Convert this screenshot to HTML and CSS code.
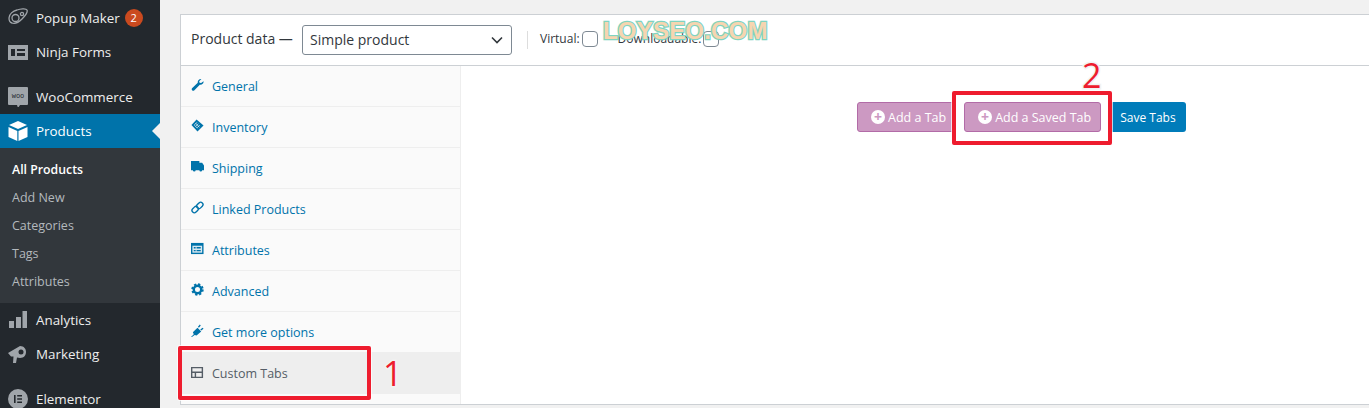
FILE: index.html
```html
<!DOCTYPE html>
<html lang="en">
<head>
    <meta charset="UTF-8">
    <meta name="viewport" content="width=device-width, initial-scale=1.0">
    <title>Edit Product</title>
    <link rel="stylesheet" href="styles.css">
</head>
<body>
    <nav class="sidebar">
        <a class="menu-item">
            <svg class="menu-icon" viewBox="0 0 20 20"><g fill="none" stroke="#a0a5aa" stroke-width="1.3"><path d="M1 10c0-4 4-7 8-8 3-1 9-2 10 0 1 2-2 6-5 9-3 3-7 5-10 4-2-.5-3-3-3-5z"/><circle cx="7.5" cy="10" r="3.5"/><circle cx="14" cy="6" r="1.6"/></g></svg>
            <span>Popup Maker</span><span class="badge">2</span>
        </a>
        <a class="menu-item">
            <svg class="menu-icon" viewBox="0 0 20 20"><path fill="#a0a5aa" fill-rule="evenodd" d="M0 3h20v15H0zM3 7v7h4V7zm6 0v2h8V7zm0 4v3h8v-3z"/></svg>
            <span>Ninja Forms</span>
        </a>
        <div class="menu-sep"></div>
        <a class="menu-item">
            <svg class="menu-icon" viewBox="0 0 20 20"><path fill="#a0a5aa" d="M1 0h18a1 1 0 0 1 1 1v16a1 1 0 0 1-1 1h-7l-2 3-1-3H1a1 1 0 0 1-1-1V1a1 1 0 0 1 1-1z"/><text x="10" y="11" class="woo-text">woo</text></svg>
            <span>WooCommerce</span>
        </a>
        <a class="menu-item current">
            <svg class="menu-icon" viewBox="0 0 20 20"><path fill="#fff" d="M10 0l9 4-9 4-9-4zM.5 6l8.8 4v10L.5 16zM19.5 6v10l-9 4V10z"/></svg>
            <span>Products</span>
        </a>
        <div class="submenu">
            <a class="sub-active">All Products</a>
            <a>Add New</a>
            <a>Categories</a>
            <a>Tags</a>
            <a>Attributes</a>
        </div>
        <a class="menu-item">
            <svg class="menu-icon" viewBox="0 0 20 20"><path fill="#a0a5aa" d="M1 11h5v7H1zM8 7h5v11H8zM14.500 1H19v17h-4.500z"/></svg>
            <span>Analytics</span>
        </a>
        <a class="menu-item">
            <svg class="menu-icon" viewBox="0 0 20 20"><path fill="#a0a5aa" d="M0 9l12-7c4 0 6 3 6 6s-2 6-6 6l-3-.5-1 5.500H5l.5-6.500H3z"/><circle cx="13" cy="8" r="2.500" fill="#23282d"/></svg>
            <span>Marketing</span>
        </a>
        <div class="menu-sep"></div>
        <a class="menu-item">
            <svg class="menu-icon" viewBox="0 0 20 20"><path fill="#a0a5aa" fill-rule="evenodd" d="M10 0a10 10 0 1 1 0 20 10 10 0 0 1 0-20zM6 6v8h1.600V6zm3.200 0v1.600H14V6zm0 3.200v1.600H14V9.200zm0 3.200V14H14v-1.600z"/></svg>
            <span>Elementor</span>
        </a>
    </nav>

    <main class="content">
        <section class="product-box">
            <header class="box-head">
                <span class="box-title">Product data —</span>
                <div class="fake-select">
                    <span class="select-text">Simple product</span>
                    <svg width="12" height="8" viewBox="0 0 12 8"><path d="M1 1.500l5 5 5-5" fill="none" stroke="#32373c" stroke-width="1.600"/></svg>
                </div>
                <div class="head-sep"></div>
                <label class="head-check">Virtual: <span class="checkbox"></span></label>
                <label class="head-check">Downloadable: <span class="checkbox"></span></label>
            </header>
            <div class="box-body">
                <ul class="tabs">
                    <li><svg viewBox="0 0 14 14"><path d="M13.500 3.500c.4 2-1.500 4.300-4 3.800L3.400 13.400c-1.500 1.200-3.500-.8-2.300-2.300l6.200-6c-.5-2.500 1.800-4.500 3.900-4L8.800 3.500l.4 1.600 1.700.4z"/></svg>General</li>
                    <li><svg viewBox="0 0 14 14"><path d="M6 .5l7.500 6.500L7 13.500.5 6.500z"/><path d="M3.500 6.500l3-3M5 8l3-3M6.500 9.500l3-3M5 4.500L9 9M3.500 6.500l3.500 3.500" stroke="#fafafa" stroke-width=".7" fill="none"/></svg>Inventory</li>
                    <li><svg viewBox="0 0 14 14"><path d="M0 1h9v2h3l2 3v5h-2a1.500 1.500 0 0 1-3 0H5a1.500 1.500 0 0 1-3 0H0z"/></svg>Shipping</li>
                    <li><svg viewBox="0 0 14 14"><g fill="none" stroke="#0073aa" stroke-width="1.500"><rect x="7" y="1" width="5" height="7.500" rx="2.500" transform="rotate(45 9.500 4.750)"/><rect x="2" y="5.500" width="5" height="7.500" rx="2.500" transform="rotate(45 4.500 9.250)"/></g></svg>Linked Products</li>
                    <li><svg viewBox="0 0 14 14"><path d="M0 1h13.500v12H0z"/><path fill="#d7e8f0" d="M1.500 4h10.500v7.500H1.500z"/><path d="M3 5.500h2v1.500H3zM6 5.500h4.500v1.500H6zM3 8.500h2V10H3zM6 8.500h4.500V10H6z"/></svg>Attributes</li>
                    <li><svg viewBox="0 0 14 14"><circle cx="7" cy="7" r="4" fill="none" stroke="#0073aa" stroke-width="2.600"/><circle cx="7" cy="7" r="5.700" fill="none" stroke="#0073aa" stroke-width="2" stroke-dasharray="2.400 2.070"/></svg>Advanced</li>
                    <li><svg viewBox="0 0 14 14"><path d="M0 14l3-3-1-2 5-5 4 4-5 4.500-2-.7-3 2.200zM7.500 3l2-2.500 1 1L8.500 4zM10 6l2.500-2 1 1L11 7z"/></svg>Get more options</li>
                    <li class="active"><svg viewBox="0 0 14 14"><path fill-rule="evenodd" fill="#555d66" d="M0 1h13v12H0zM1.500 2.500v3.500h10V2.500zm0 5v4h2.500v-4zm4 0v4h6v-4z"/></svg>Custom Tabs</li>
                </ul>
                <div class="tab-panel">
                    <a class="btn btn-purple"><span class="plus">+</span>Add a Tab</a>
                    <a class="btn btn-purple"><span class="plus">+</span>Add a Saved Tab</a>
                    <a class="btn btn-blue">Save Tabs</a>
                </div>
            </div>
        </section>
    </main>

    <!-- annotations drawn on top of the screenshot -->
    <div class="mark mark-one"></div>
    <div class="mark mark-two"></div>
    <span class="mark-num num-one">1</span>
    <span class="mark-num num-two">2</span>
    <span class="watermark">LOYSEO.COM</span>
</body>
</html>
```

FILE: styles.css
```css
html, body {
    height: 408px;
    overflow: hidden;
}
body {
    margin: 0;
    display: flex;
    background-color: #f1f1f1;
    color: #32373c;
    font-family: "Open Sans", "Noto Sans", sans-serif;
    font-size: 13px;
    position: relative;
}
a {
    text-decoration: none;
}

/* sidebar */
.sidebar {
    width: 160px;
    flex-shrink: 0;
    height: 408px;
    padding-top: 1px;
    box-sizing: border-box;
    background-color: #23282d;
    overflow: hidden;
}
.menu-item {
    display: flex;
    align-items: center;
    height: 34px;
    padding-left: 8px;
    color: #eee;
    font-size: 13.400px;
    position: relative;
}
.menu-icon {
    width: 20px;
    height: 20px;
    margin-right: 8px;
    flex-shrink: 0;
}
.woo-text {
    font-family: "Liberation Mono", monospace;
    font-size: 7px;
    text-anchor: middle;
    fill: #23282d;
}
.badge {
    width: 18px;
    height: 18px;
    margin-left: 5px;
    border-radius: 50%;
    background-color: #ca4a1f;
    color: #fff;
    font-size: 11px;
    line-height: 18px;
    text-align: center;
}
.menu-sep {
    height: 11px;
}
.current {
    background-color: #0073aa;
    color: #fff;
}
.current::after {
    content: "";
    position: absolute;
    right: 0;
    top: 9px;
    border: 8px solid transparent;
    border-right-color: #f1f1f1;
    border-left-width: 0;
}
.submenu {
    display: flex;
    flex-direction: column;
    padding: 8px 0 7px;
    background-color: #32373c;
}
.submenu a {
    height: 28px;
    line-height: 28px;
    padding-left: 12px;
    color: #b4b9be;
    font-size: 12.500px;
}
.submenu a.sub-active {
    color: #fff;
    font-weight: 600;
    font-size: 12.300px;
}

/* product data box */
.content {
    flex: 1;
    padding: 14px 0 0 20px;
    min-width: 0;
}
.product-box {
    height: 391px;
    box-sizing: border-box;
    background-color: #fff;
    border: 1px solid #ccd0d4;
    border-right: none;
    display: flex;
    flex-direction: column;
}
.box-head {
    display: flex;
    align-items: center;
    height: 51px;
    flex-shrink: 0;
    box-sizing: border-box;
    padding-left: 10px;
    border-bottom: 1px solid #ccd0d4;
}
.box-title {
    width: 111px;
    margin-bottom: 4px;
    font-size: 14px;
}
.fake-select {
    display: flex;
    align-items: center;
    justify-content: space-between;
    width: 210px;
    height: 30px;
    box-sizing: border-box;
    padding: 0 8px 0 7px;
    border: 1px solid #7e8993;
    border-radius: 3px;
    font-size: 14px;
}
.select-text {
    margin-bottom: 2px;
}
.head-sep {
    width: 1px;
    height: 18px;
    margin: 0 12px 0 15px;
    background-color: #ddd;
}
.head-check {
    display: flex;
    align-items: center;
    gap: 2px;
    margin: 0 20px 3px 0;
    font-size: 12px;
}
.checkbox {
    width: 16px;
    height: 16px;
    box-sizing: border-box;
    border: 1px solid #7e8993;
    border-radius: 4px;
    background-color: #fff;
}
.box-body {
    display: flex;
    flex: 1;
    min-height: 0;
}
.tabs {
    width: 280px;
    flex-shrink: 0;
    margin: 0;
    padding: 0;
    list-style: none;
    background-color: #fafafa;
    border-right: 1px solid #eee;
    box-sizing: border-box;
}
.tabs li {
    display: flex;
    align-items: center;
    height: 41px;
    box-sizing: border-box;
    padding-left: 10px;
    border-bottom: 1px solid #eee;
    color: #0073aa;
    font-size: 12.500px;
}
.tabs li svg {
    width: 13px;
    height: 13px;
    margin: -3px 8px 0 0;
    fill: #0073aa;
}
.tabs li.active {
    background-color: #eee;
    color: #555d66;
    border-bottom: none;
}
.tab-panel {
    display: flex;
    align-items: flex-start;
    gap: 8px;
    padding: 36px 0 0 396px;
}
.btn {
    display: flex;
    align-items: center;
    height: 30px;
    box-sizing: border-box;
    padding: 0 10px;
    border-radius: 3px;
    font-size: 12.500px;
    white-space: nowrap;
}
.btn-purple {
    background-color: #cc99c2;
    border: 1px solid #b26ba7;
    color: #fff;
    padding: 0 9px 0 13px;
}
.btn-blue {
    margin-left: 1px;
    background-color: #007cba;
    color: #fff;
    font-size: 12px;
}
.plus {
    width: 14px;
    height: 14px;
    margin-right: 3px;
    border-radius: 50%;
    background-color: #fff;
    color: #cc99c2;
    font-size: 14px;
    font-weight: 700;
    line-height: 13px;
    text-align: center;
}

/* annotations */
.mark {
    position: absolute;
    box-sizing: border-box;
    border: 4px solid #ee1c2e;
    border-radius: 2px;
    box-shadow: 0 0 0 1px rgba(255, 255, 255, 0.7);
}
.mark-one {
    left: 178px;
    top: 346px;
    width: 193px;
    height: 54px;
}
.mark-two {
    left: 952px;
    top: 91px;
    width: 160px;
    height: 54px;
}
.mark-num {
    position: absolute;
    color: #ee1c2e;
    font-family: "Open Sans", sans-serif;
    font-size: 34px;
    font-weight: 500;
    line-height: 34px;
    -webkit-text-stroke: 3px #f2f2f2;
    paint-order: stroke fill;
}
.num-one {
    left: 383px;
    top: 356px;
}
.num-two {
    left: 1082px;
    top: 58px;
}
.watermark {
    position: absolute;
    left: 603px;
    top: 17px;
    color: #f6d5b0;
    font-family: "Liberation Sans", sans-serif;
    font-size: 24px;
    font-weight: 700;
    line-height: 28px;
    letter-spacing: 0.200px;
    -webkit-text-stroke: 2.500px #7fd4c0;
    paint-order: stroke fill;
}
```
